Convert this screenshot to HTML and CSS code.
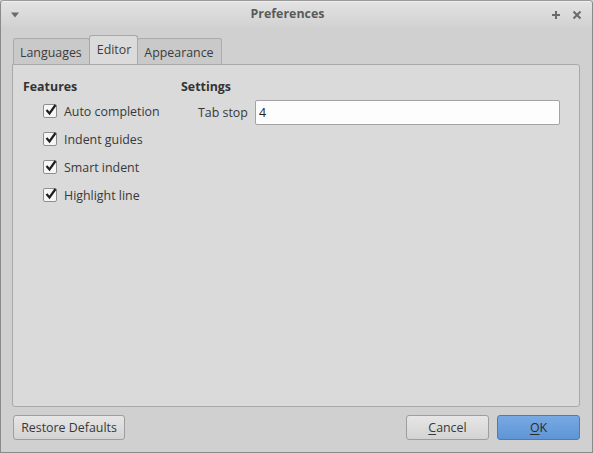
FILE: index.html
```html
<!DOCTYPE html>
<html>
<head>
<meta charset="utf-8">
<link rel="stylesheet" href="styles.css">
</head>
<body>
<div class="window">
  <div class="titlebar">
    <span class="menu-btn"><svg width="10" height="6" viewBox="0 0 10 6"><path d="M1 0.5 L9 0.5 L5 5.5 Z" fill="#6a6a6a"/></svg></span>
    <span class="title">Preferences</span>
    <span class="ctrls">
      <svg width="10" height="10" viewBox="0 0 10 10"><path d="M5 1 V9 M1 5 H9" stroke="#6a6a6a" stroke-width="2"/></svg>
      <svg width="10" height="10" viewBox="0 0 10 10"><path d="M1.5 1.5 L8.5 8.5 M8.5 1.5 L1.5 8.5" stroke="#6a6a6a" stroke-width="2"/></svg>
    </span>
  </div>
  <div class="content">
    <div class="tabs">
      <div class="tab">Languages</div>
      <div class="tab active">Editor</div>
      <div class="tab">Appearance</div>
    </div>
    <div class="panel">
      <div class="col features">
        <div class="heading">Features</div>
        <div class="checks">
          <label class="check"><span class="box"><svg width="14" height="14" viewBox="0 0 14 14"><path d="M2.5 7 L5.5 10.5 L11.5 2" fill="none" stroke="#1e1e1e" stroke-width="2.2"/></svg></span>Auto completion</label>
          <label class="check"><span class="box"><svg width="14" height="14" viewBox="0 0 14 14"><path d="M2.5 7 L5.5 10.5 L11.5 2" fill="none" stroke="#1e1e1e" stroke-width="2.2"/></svg></span>Indent guides</label>
          <label class="check"><span class="box"><svg width="14" height="14" viewBox="0 0 14 14"><path d="M2.5 7 L5.5 10.5 L11.5 2" fill="none" stroke="#1e1e1e" stroke-width="2.2"/></svg></span>Smart indent</label>
          <label class="check"><span class="box"><svg width="14" height="14" viewBox="0 0 14 14"><path d="M2.5 7 L5.5 10.5 L11.5 2" fill="none" stroke="#1e1e1e" stroke-width="2.2"/></svg></span>Highlight line</label>
        </div>
      </div>
      <div class="col settings">
        <div class="heading">Settings</div>
        <div class="field">
          <span class="field-label">Tab stop</span>
          <div class="input">4</div>
        </div>
      </div>
    </div>
    <div class="buttons">
      <button class="btn restore">Restore Defaults</button>
      <div class="spacer"></div>
      <button class="btn cancel"><u>C</u>ancel</button>
      <button class="btn ok"><u>O</u>K</button>
    </div>
  </div>
</div>
</body>
</html>
```
FILE: styles.css
```css
html, body {
  margin: 0;
  padding: 0;
  background: #d1d1d1;
}
body {
  font-family: "Open Sans", "Noto Sans", sans-serif;
  font-size: 12.4px;
  color: #383838;
  white-space: nowrap;
}
.window {
  width: 593px;
  height: 453px;
  box-sizing: border-box;
  border: 1px solid #8a8a8a;
  border-top-color: #9a9a9a;
  border-radius: 4px 4px 0 0;
  background: #d0d0d0;
  display: flex;
  flex-direction: column;
  overflow: hidden;
}
.titlebar {
  height: 25px;
  flex: none;
  display: flex;
  align-items: center;
  background: linear-gradient(#e2e2e2, #d2d2d2);
  border-top: 1px solid #f0f0f0;
}
.menu-btn {
  width: 27px;
  display: flex;
  justify-content: center;
  padding-top: 1px;
}
.title {
  flex: 1;
  text-align: center;
  font-weight: bold;
  color: #5a5a5a;
  padding-right: 4px;
  padding-bottom: 2px;
}
.ctrls {
  display: flex;
  gap: 11px;
  padding-right: 10px;
}
.content {
  flex: 1;
  display: flex;
  flex-direction: column;
  padding: 8px 12px 0 11px;
}
.tabs {
  display: flex;
  align-items: flex-end;
  padding-left: 1px;
  height: 29px;
}
.tab {
  height: 26px;
  box-sizing: border-box;
  padding: 1px 7px 0 6px;
  line-height: 25px;
  border: 1px solid #ababab;
  border-bottom: none;
  border-radius: 3px 3px 0 0;
  background: #c9c9c9;
  color: #3c3c3c;
}
.tab.active {
  height: 29px;
  line-height: 26px;
  background: #dbdbdb;
  border-color: #a8a8a8;
  padding: 1px 6px 0 7px;
}
.tab + .tab {
  margin-left: -1px;
}
.panel {
  height: 343px;
  box-sizing: border-box;
  border: 1px solid #a9a9a9;
  border-radius: 0 3px 3px 3px;
  background: #dadada;
  display: flex;
  padding: 12px 20px 0 10px;
}
.heading {
  font-weight: bold;
  color: #333;
  height: 20px;
  line-height: 20px;
}
.features {
  width: 158px;
}
.checks {
  padding-top: 0;
  padding-left: 20px;
  display: flex;
  flex-direction: column;
}
.check {
  display: flex;
  align-items: center;
  height: 28px;
}
.box {
  width: 14px;
  height: 14px;
  box-sizing: border-box;
  border: 1px solid #8e8e8e;
  border-radius: 2px;
  background: #f6f6f6;
  margin-right: 7px;
  position: relative;
}
.box svg {
  position: absolute;
  left: 0;
  top: -2px;
}
.settings {
  flex: 1;
}
.field {
  display: flex;
  align-items: center;
  padding-left: 17px;
  margin-top: 3px;
}
.field-label {
  margin-right: 7px;
}
.input {
  flex: 1;
  height: 25px;
  box-sizing: border-box;
  border: 1px solid #a3a3a3;
  border-radius: 2px;
  background: #fdfdfd;
  padding-left: 3px;
  line-height: 23px;
  color: #222;
  margin-right: -1px;
}
.buttons {
  display: flex;
  align-items: center;
  padding-top: 8px;
  padding-left: 1px;
}
.spacer {
  flex: 1;
}
.btn {
  font-family: inherit;
  font-size: 12.4px;
  height: 25px;
  box-sizing: border-box;
  border: 1px solid #9e9e9e;
  border-radius: 3px;
  background: linear-gradient(#e6e6e6, #d3d3d3);
  color: #383838;
  padding: 0 6px;
  margin: 0;
  white-space: nowrap;
}
.restore {
  width: 112px;
}
.cancel {
  width: 83px;
  margin-right: 8px;
}
.ok {
  width: 83px;
  background: linear-gradient(#77a9e3, #5f95d6);
  border-color: #4e7bb3;
  color: #2b2b2b;
}
.btn u {
  text-underline-offset: 2px;
}
```
